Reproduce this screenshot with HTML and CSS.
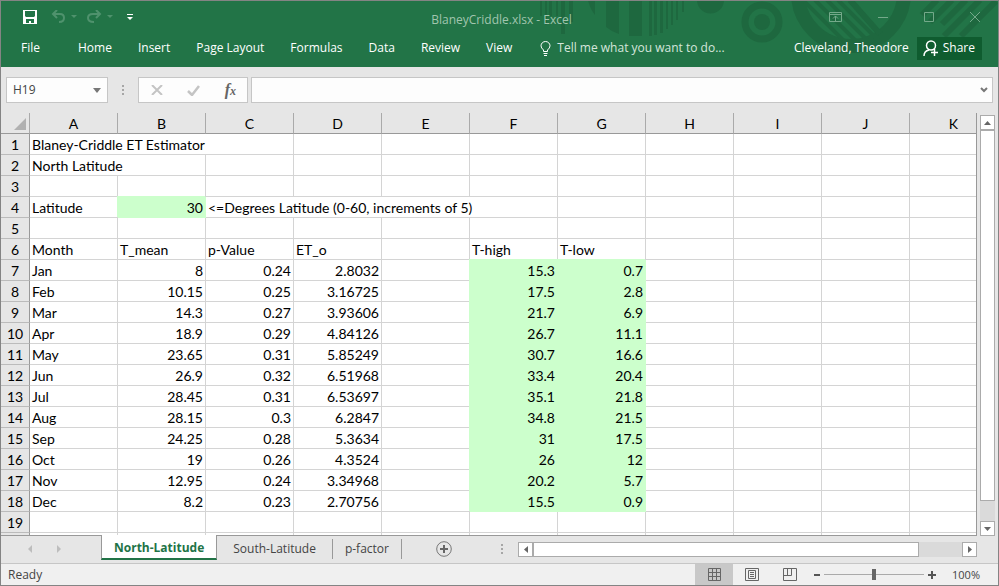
FILE: index.html
```
<!DOCTYPE html>
<html lang="en">
<head>
<meta charset="utf-8">
<title>BlaneyCriddle.xlsx - Excel</title>
<link rel="stylesheet" href="styles.css">
</head>
<body>
<header class="ribbon">
  <svg class="pattern" width="463" height="66" viewBox="535 1 463 66" aria-hidden="true">
    <path d="M540 0h2v16h-2zM545 0h2v25h-2zM549 0h3v16h-3zM556 0h2v16h-2zM561 0h4v34h-4zM569 0h4v22h-4z"/>
    <path d="M588 0h7v15q-5-6-7-15zM606 0h13v34q-7-2-13-7zM629 0h13v36h-13zM649 0h3v36h-3zM654 0h3v35h-3zM660 0h3v33h-3zM666 0h2v29h-2zM671 0h2v25h-2zM676 0h2v20h-2zM682 0h2v12h-2z"/>
    <path d="M697 0a13 13 0 0 0 27 0z"/>
    <circle class="ring thin" cx="762" cy="22" r="17"/><circle cx="762" cy="22" r="8"/>
    <circle class="ring" cx="851" cy="-7" r="53"/>
    <path class="line" d="M805 2l38 38M815 0l45 45M827 0l44 44M838 0l42 42"/>
    <path class="line wide" d="M850 0l30 34M922 15l15-15M930 22l22-22M942 24l24-24M944 36l36-36M961 36l35-35"/>
  </svg>
  <div class="titlebar">
    <div class="quick">
      <button class="icon" aria-label="Save"><svg width="14" height="14" viewBox="0 0 14 14"><path fill="#fff" fill-rule="evenodd" d="M0 0h14v14H0zM2 1v5l1 1h8l1-1V1zM3 9v4h3v-2h2v2h3V9z"/></svg></button>
      <button class="icon" aria-label="Undo"><svg width="26" height="14" viewBox="0 0 26 14"><path fill="none" stroke="#4f926d" stroke-width="2" d="M6 0L2 4l4 4M2 4h7q4 0 4 4 0 4-5 4"/><path fill="#4f926d" d="M20 5h6l-3 3z"/></svg></button>
      <button class="icon" aria-label="Redo"><svg width="26" height="14" viewBox="0 0 26 14"><path fill="none" stroke="#4f926d" stroke-width="2" d="M9 0l4 4-4 4M13 4H6Q1 4 1 8q0 4 6 4"/><path fill="#4f926d" d="M20 5h6l-3 3z"/></svg></button>
      <button class="icon" aria-label="Customize Quick Access Toolbar"><svg width="6" height="6" viewBox="0 0 6 6"><path fill="#fff" d="M0 0h6v1H0zM0 3h6L3 6z"/></svg></button>
    </div>
    <h1 class="title">BlaneyCriddle.xlsx - Excel</h1>
    <div class="window-buttons">
      <button class="icon" aria-label="Ribbon Display Options"><svg width="13" height="11" viewBox="0 0 13 11"><path d="M.5.5h12v9H.5zM.5 2.500h12M6.500 9V4M4 6.500L6.500 4 9 6.500"/></svg></button>
      <button class="icon" aria-label="Minimize"><svg width="10" height="10" viewBox="0 0 10 10"><path d="M0 5.500h10"/></svg></button>
      <button class="icon" aria-label="Maximize"><svg width="10" height="10" viewBox="0 0 10 10"><path d="M.5.5h9v9h-9z"/></svg></button>
      <button class="icon" aria-label="Close"><svg width="10" height="10" viewBox="0 0 10 10"><path d="M0 0l10 10M10 0L0 10"/></svg></button>
    </div>
  </div>
  <nav class="menu">
    <button>File</button><button>Home</button><button>Insert</button><button>Page Layout</button><button>Formulas</button><button>Data</button><button>Review</button><button>View</button>
    <button class="tell"><svg width="11" height="15" viewBox="0 0 11 15"><path fill="none" stroke="#fff" d="M3.500 10.500V9Q1 7 1 4.800a4.500 4.300 0 0 1 9 0Q10 7 7.500 9v1.500zM3.500 12.500h4M4 14.500h3"/></svg>Tell me what you want to do...</button>
    <span class="user">Cleveland, Theodore</span>
    <button class="share"><svg width="16" height="17" viewBox="0 0 16 17"><g fill="none" stroke="#fff" stroke-width="1.500"><circle cx="8" cy="5.500" r="4.500"/><path d="M1 16q0-5 5-6M8 12.500h7M11.500 9v7"/></g></svg>Share</button>
  </nav>
</header>
<section class="formula-bar" aria-label="Formula bar">
  <div class="name-box"><input aria-label="Name Box" value="H19"><svg width="8" height="5" viewBox="0 0 8 5"><path fill="#777" d="M0 0h8L4 5z"/></svg></div>
  <svg class="grip" width="2" height="10" viewBox="0 0 2 10"><path fill="#a6a6a6" d="M0 0h2v2H0zM0 4h2v2H0zM0 8h2v2H0z"/></svg>
  <div class="formula-tools">
    <button class="icon" aria-label="Cancel"><svg width="12" height="10" viewBox="0 0 12 10"><path fill="none" stroke="#c4c4c4" stroke-width="2" d="M1 0l10 10M11 0L1 10"/></svg></button>
    <button class="icon" aria-label="Enter"><svg width="13" height="11" viewBox="0 0 13 11"><path fill="none" stroke="#c4c4c4" stroke-width="2.500" d="M1 6l4 4 7-9"/></svg></button>
    <button class="fx" aria-label="Insert Function">f<small>x</small></button>
  </div>
  <div class="formula-input"><input aria-label="Formula"><svg width="8" height="6" viewBox="0 0 8 6"><path fill="none" stroke="#777" stroke-width="2" d="M1 1l3 3 3-3"/></svg></div>
</section>
<main class="workspace">
  <div class="grid">
    <table>
      <colgroup><col class="head-col"><col span="11" class="data-col"></colgroup>
      <thead><tr><th class="corner" aria-label="Select all"><svg width="12" height="12" viewBox="0 0 12 12"><path fill="#b1b1b1" d="M12 0v12H0z"/></svg></th><th>A</th><th>B</th><th>C</th><th>D</th><th>E</th><th>F</th><th>G</th><th>H</th><th>I</th><th>J</th><th>K</th></tr></thead>
      <tbody>
        <tr><th>1</th><td colspan="3">Blaney-Criddle ET Estimator</td><td></td><td></td><td></td><td></td><td></td><td></td><td></td><td></td></tr>
        <tr><th>2</th><td colspan="2">North Latitude</td><td></td><td></td><td></td><td></td><td></td><td></td><td></td><td></td><td></td></tr>
        <tr><th>3</th><td></td><td></td><td></td><td></td><td></td><td></td><td></td><td></td><td></td><td></td><td></td></tr>
        <tr><th>4</th><td>Latitude</td><td class="n g">30</td><td colspan="4">&lt;=Degrees Latitude (0-60, increments of 5)</td><td></td><td></td><td></td><td></td><td></td></tr>
        <tr><th>5</th><td></td><td></td><td></td><td></td><td></td><td></td><td></td><td></td><td></td><td></td><td></td></tr>
        <tr><th>6</th><td>Month</td><td>T_mean</td><td>p-Value</td><td>ET_o</td><td></td><td>T-high</td><td>T-low</td><td></td><td></td><td></td><td></td></tr>
        <tr><th>7</th><td>Jan</td><td class="n">8</td><td class="n">0.24</td><td class="n">2.8032</td><td></td><td class="n g">15.3</td><td class="n g">0.7</td><td></td><td></td><td></td><td></td></tr>
        <tr><th>8</th><td>Feb</td><td class="n">10.15</td><td class="n">0.25</td><td class="n">3.16725</td><td></td><td class="n g">17.5</td><td class="n g">2.8</td><td></td><td></td><td></td><td></td></tr>
        <tr><th>9</th><td>Mar</td><td class="n">14.3</td><td class="n">0.27</td><td class="n">3.93606</td><td></td><td class="n g">21.7</td><td class="n g">6.9</td><td></td><td></td><td></td><td></td></tr>
        <tr><th>10</th><td>Apr</td><td class="n">18.9</td><td class="n">0.29</td><td class="n">4.84126</td><td></td><td class="n g">26.7</td><td class="n g">11.1</td><td></td><td></td><td></td><td></td></tr>
        <tr><th>11</th><td>May</td><td class="n">23.65</td><td class="n">0.31</td><td class="n">5.85249</td><td></td><td class="n g">30.7</td><td class="n g">16.6</td><td></td><td></td><td></td><td></td></tr>
        <tr><th>12</th><td>Jun</td><td class="n">26.9</td><td class="n">0.32</td><td class="n">6.51968</td><td></td><td class="n g">33.4</td><td class="n g">20.4</td><td></td><td></td><td></td><td></td></tr>
        <tr><th>13</th><td>Jul</td><td class="n">28.45</td><td class="n">0.31</td><td class="n">6.53697</td><td></td><td class="n g">35.1</td><td class="n g">21.8</td><td></td><td></td><td></td><td></td></tr>
        <tr><th>14</th><td>Aug</td><td class="n">28.15</td><td class="n">0.3</td><td class="n">6.2847</td><td></td><td class="n g">34.8</td><td class="n g">21.5</td><td></td><td></td><td></td><td></td></tr>
        <tr><th>15</th><td>Sep</td><td class="n">24.25</td><td class="n">0.28</td><td class="n">5.3634</td><td></td><td class="n g">31</td><td class="n g">17.5</td><td></td><td></td><td></td><td></td></tr>
        <tr><th>16</th><td>Oct</td><td class="n">19</td><td class="n">0.26</td><td class="n">4.3524</td><td></td><td class="n g">26</td><td class="n g">12</td><td></td><td></td><td></td><td></td></tr>
        <tr><th>17</th><td>Nov</td><td class="n">12.95</td><td class="n">0.24</td><td class="n">3.34968</td><td></td><td class="n g">20.2</td><td class="n g">5.7</td><td></td><td></td><td></td><td></td></tr>
        <tr><th>18</th><td>Dec</td><td class="n">8.2</td><td class="n">0.23</td><td class="n">2.70756</td><td></td><td class="n g">15.5</td><td class="n g">0.9</td><td></td><td></td><td></td><td></td></tr>
        <tr><th>19</th><td></td><td></td><td></td><td></td><td></td><td></td><td></td><td></td><td></td><td></td><td></td></tr>
        <tr><th></th><td></td><td></td><td></td><td></td><td></td><td></td><td></td><td></td><td></td><td></td><td></td></tr>
      </tbody>
    </table>
  </div>
  <div class="vscroll">
    <button aria-label="Scroll up"><svg width="7" height="4" viewBox="0 0 7 4"><path d="M0 4h7L3.500 0z"/></svg></button>
    <div class="thumb"></div>
    <button aria-label="Scroll down"><svg width="7" height="4" viewBox="0 0 7 4"><path d="M0 0h7L3.500 4z"/></svg></button>
  </div>
</main>
<div class="sheet-bar">
  <div class="sheet-nav">
    <button class="icon" aria-label="Previous sheet"><svg width="4" height="8" viewBox="0 0 4 8"><path fill="#bdbdbd" d="M4 0v8L0 4z"/></svg></button>
    <button class="icon" aria-label="Next sheet"><svg width="4" height="8" viewBox="0 0 4 8"><path fill="#bdbdbd" d="M0 0v8l4-4z"/></svg></button>
  </div>
  <div class="sheets">
    <button class="sheet active">North-Latitude</button><button class="sheet wide">South-Latitude</button><button class="sheet">p-factor</button>
  </div>
  <button class="icon add" aria-label="New sheet"><svg width="16" height="16" viewBox="0 0 16 16"><circle cx="8" cy="8" r="7.300" fill="none" stroke="#777"/><path fill="#666" d="M7 4h2v3h3v2H9v3H7V9H4V7h3z"/></svg></button>
  <div class="hscroll-area">
    <svg width="2" height="10" viewBox="0 0 2 10"><path fill="#a6a6a6" d="M0 0h2v2H0zM0 4h2v2H0zM0 8h2v2H0z"/></svg>
    <div class="hscroll">
      <button aria-label="Scroll left"><svg width="4" height="7" viewBox="0 0 4 7"><path d="M4 0v7L0 3.500z"/></svg></button>
      <div class="thumb"></div>
      <button aria-label="Scroll right"><svg width="4" height="7" viewBox="0 0 4 7"><path d="M0 0v7l4-3.500z"/></svg></button>
    </div>
  </div>
</div>
<footer class="status">
  <span class="ready">Ready</span>
  <button class="view on" aria-label="Normal view"><svg width="13" height="13" viewBox="0 0 13 13"><path d="M.5.5h12v12H.5zM4.500 0v13M8.500 0v13M0 4.500h13M0 8.500h13"/></svg></button>
  <button class="view" aria-label="Page Layout view"><svg width="14" height="13" viewBox="0 0 14 13"><path d="M.5.5h13v12H.5zM3.500 2.500h7v8h-7zM5 4.500h4M5 6.500h4M5 8.500h4"/></svg></button>
  <button class="view" aria-label="Page Break Preview"><svg width="14" height="13" viewBox="0 0 14 13"><path d="M.5.5h13v12H.5zM.5 7.500h8M4.500 0v7M8.500 0v7.500"/></svg></button>
  <div class="zoom">
    <button class="icon" aria-label="Zoom out"><svg width="6" height="8" viewBox="0 0 6 8"><path fill="#555" d="M0 3h6v2H0z"/></svg></button>
    <input type="range" min="0" max="100" value="50" aria-label="Zoom">
    <button class="icon" aria-label="Zoom in"><svg width="8" height="8" viewBox="0 0 8 8"><path fill="#555" d="M3 0h2v3h3v2H5v3H3V5H0V3h3z"/></svg></button>
  </div>
  <output class="percent">100%</output>
</footer>
</body>
</html>
```
FILE: styles.css
```
* { box-sizing: border-box; }
body {
  margin: 0;
  height: 100vh;
  display: flex;
  flex-direction: column;
  overflow: hidden;
  border: 1px solid #848484;
  background: #e6e6e6;
  font: 12px/16px "Open Sans", "Noto Sans", sans-serif;
  color: #444;
}
button { border: 0; padding: 0; background: none; font: inherit; color: inherit; }
input { border: 0; padding: 0; background: none; font: inherit; color: inherit; min-width: 0; outline: 0; }
svg { display: block; flex: none; }
.icon { display: flex; align-items: center; justify-content: center; }

.ribbon { position: relative; flex: none; height: 66px; background: #227447; color: #fff; }
.pattern { position: absolute; right: 0; top: 0; fill: #1e683f; }
.pattern .ring { fill: none; stroke: #1e683f; stroke-width: 14; }
.pattern .thin { stroke-width: 7; }
.pattern .line { fill: none; stroke: #1e683f; stroke-width: 4; }
.pattern .wide { stroke-width: 6; }
.titlebar { position: relative; display: flex; justify-content: space-between; height: 32px; padding: 0 18px 0 22px; }
.quick { display: flex; align-items: center; gap: 10px; flex: 1; }
.quick .icon:nth-child(2) { margin-left: 4px; }
.quick .icon:last-child { margin-left: 4px; }
.title { margin: 0; padding-top: 7px; font: 12px/24px "Open Sans", "Noto Sans", sans-serif; color: #a1c5ae; }
.window-buttons { display: flex; align-items: center; justify-content: flex-end; gap: 36px; flex: 1; }
.window-buttons svg { fill: none; stroke: #74a98a; }
.menu { position: relative; display: flex; align-items: center; height: 30px; padding: 0 16px 0 20px; gap: 26px; white-space: nowrap; }
.menu button:first-child { margin-right: 12px; }
.tell { display: flex; align-items: center; gap: 6px; margin-left: 2px; color: #d5e6dc; }
.user { margin-left: auto; }
.share { display: flex; align-items: center; gap: 4px; height: 23px; padding: 0 7px 0 6px; margin-left: -18px; background: #0f5c2f; }

.formula-bar { display: flex; align-items: center; flex: none; height: 46px; padding: 0 5px; }
.name-box, .formula-tools, .formula-input { display: flex; align-items: center; height: 26px; border: 1px solid #c6c6c6; background: #fdfdfd; }
.name-box { width: 102px; padding: 0 6px; }
.name-box input { flex: 1; }
.grip { margin: 0 14px; }
.formula-tools { width: 110px; justify-content: space-between; padding: 0 11px 0 12px; margin-right: 3px; }
.fx { font: italic bold 16px/20px "Liberation Serif", serif; color: #666; }
.fx small { font-size: 12px; }
.formula-input { flex: 1; padding: 0 4px; }
.formula-input input { flex: 1; }

.workspace { display: flex; flex: 1; min-height: 0; }
.grid { flex: 1; overflow: hidden; border-right: 1px solid #999; border-bottom: 1px solid #999; background: #fff; }
table { width: 997px; table-layout: fixed; border-collapse: separate; border-spacing: 0; font: 14px/19px Lato, "Open Sans", sans-serif; color: #000; }
.head-col { width: 29px; }
.data-col { width: 88px; }
th, td { height: 21px; padding: 1px 2px 0; border-right: 1px solid #d4d4d4; border-bottom: 1px solid #d4d4d4; text-align: left; white-space: nowrap; font-weight: 400; }
th { padding: 1px 0 0; text-align: center; background: #e6e6e6; }
tbody th { border-right-color: #999; border-bottom-color: #bbb; }
thead th { border-bottom-color: #999; border-right-color: #aaa; }
.corner svg { margin: 0 3px 0 auto; }
.n { text-align: right; }
.g { background: #ccffcc; border-color: #ccffcc; box-shadow: -1px -1px 0 #ccffcc; }
.vscroll { display: flex; flex-direction: column; width: 15px; margin: 2px 3px 0; background: #dadada; }
.vscroll button, .hscroll button { display: flex; align-items: center; justify-content: center; width: 15px; height: 15px; border: 1px solid #ababab; background: #fff; }
.vscroll button, .hscroll button, .thumb { flex: none; }
.vscroll path, .hscroll path { fill: #666; }
.thumb { border: 1px solid #ababab; background: #fff; }
.vscroll .thumb { flex: 0 0 371px; }
.vscroll button:last-child { margin-top: auto; }

.sheet-bar { display: flex; flex: none; height: 28px; border-bottom: 1px solid #c6c6c6; }
.sheet-nav { display: flex; align-items: center; gap: 25px; width: 100px; padding: 0 0 2px 27px; }
.sheets { display: flex; }
.sheet { padding: 0 12px; }
.sheet.wide { padding: 0 16px; }
.sheet:not(.active) { height: 20px; margin-top: 3px; border-right: 1px solid #999; }
.sheet.active { height: 25px; margin-top: -1px; padding-top: 3px; background: #fff; border: solid #999; border-width: 0 1px; border-bottom: 2px solid #217346; color: #217346; font-weight: 700; }
.add { margin-left: 34px; padding-bottom: 1px; }
.hscroll-area { display: flex; align-items: center; gap: 15px; margin-left: auto; padding: 0 21px 1px 0; }
.hscroll { display: flex; width: 459px; background: #dadada; }
.hscroll .thumb { width: 386px; }
.hscroll button:last-child { margin-left: auto; }

.status { display: flex; align-items: center; flex: none; height: 21px; padding: 0 18px 0 7px; background: #f0f0f0; }
.ready { margin-right: auto; }
.view { display: flex; align-items: center; justify-content: center; width: 38px; height: 21px; }
.view.on { background: #c8c8c8; }
.view svg { fill: none; stroke: #666; }
.zoom { display: flex; align-items: center; gap: 4px; margin-left: 5px; }
.zoom input { appearance: none; width: 100px; height: 11px; margin: 0; background: linear-gradient(#aaa, #aaa) center / 100% 1px no-repeat; }
.zoom input::-webkit-slider-thumb { appearance: none; width: 4px; height: 11px; background: #666; }
.percent { margin-left: 16px; font-size: 11px; }
```
